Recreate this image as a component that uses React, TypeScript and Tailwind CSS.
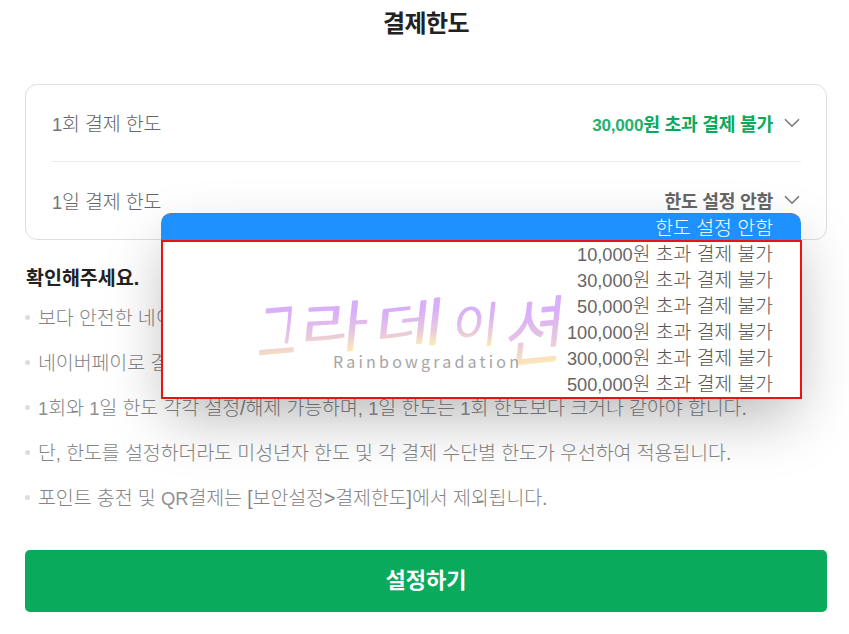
import { Fragment } from "react"

interface Limit {
  id: number
  label: string
  value: string
  color: string
}

const limits: Limit[] = [
  { id: 1, label: "1회 결제 한도", value: "30,000원 초과 결제 불가", color: "text-[#0aaa5c]" },
  { id: 2, label: "1일 결제 한도", value: "한도 설정 안함", color: "text-[#666666]" },
]

const options: string[] = [
  "10,000원 초과 결제 불가",
  "30,000원 초과 결제 불가",
  "50,000원 초과 결제 불가",
  "100,000원 초과 결제 불가",
  "300,000원 초과 결제 불가",
  "500,000원 초과 결제 불가",
]

const notes: string[] = [
  "보다 안전한 네이버페이 이용을 위해 한도를 설정해 주세요.",
  "네이버페이로 결제하는 모든 서비스에 적용됩니다.",
  "1회와 1일 한도 각각 설정/해제 가능하며, 1일 한도는 1회 한도보다 크거나 같아야 합니다.",
  "단, 한도를 설정하더라도 미성년자 한도 및 각 결제 수단별 한도가 우선하여 적용됩니다.",
  "포인트 충전 및 QR결제는 [보안설정>결제한도]에서 제외됩니다.",
]

const watermark = [
  { char: "그", transform: "translate(4 75) rotate(-5) skewX(-9) scale(0.8 1.3)" },
  { char: "라", transform: "translate(46 65) rotate(-3) skewX(-9) scale(1.4 1.05)" },
  { char: "데", transform: "translate(120 63) rotate(-6) skewX(-12) scale(1.48 0.98)" },
  { char: "이", transform: "translate(198 60) rotate(-3) skewX(-9) scale(0.98 0.92)" },
  { char: "션", transform: "translate(250 78) rotate(-6) skewX(-12) scale(1.26 1.4)" },
]

// latin runs are set a little smaller than the hangul
function Mixed({ text }: { text: string }) {
  return (
    <>
      {text.split(/([0-9,A-Z]+)/).map((part, i) =>
        i % 2 ? (
          <span key={i} className="text-[0.945em] opacity-90">{part}</span>
        ) : (
          <Fragment key={i}>{part}</Fragment>
        )
      )}
    </>
  )
}

function Chevron() {
  return (
    <svg width="16" height="10" viewBox="0 0 16 10" fill="none" className="mb-[3px] text-[#777777]">
      <path d="M1 1.2L8 8.2L15 1.2" stroke="currentColor" strokeWidth="1.6" />
    </svg>
  )
}

function Watermark() {
  return (
    <svg width="340" height="100" viewBox="0 0 340 100" className="absolute left-[90px] top-[42px]">
      <defs>
        <linearGradient id="rainbow" x1="0" y1="0" x2="0" y2="1">
          <stop offset="0.25" stopColor="#d9aefa" />
          <stop offset="0.6" stopColor="#e8c8de" />
          <stop offset="0.85" stopColor="#fbe6b8" />
        </linearGradient>
      </defs>
      {watermark.map((w) => (
        <text
          key={w.char}
          transform={w.transform}
          fontSize="52"
          fontWeight="300"
          fill="url(#rainbow)"
          stroke="url(#rainbow)"
          strokeWidth="1.5"
          strokeLinejoin="round"
        >
          {w.char}
        </text>
      ))}
      <text x="80" y="84" fontSize="16" letterSpacing="3.2" fill="#a5a5a5" fontFamily="Noto Sans CJK KR">
        Rainbowgradation
      </text>
    </svg>
  )
}

export default function App() {
  return (
    <div className="relative h-[634px] w-[849px] overflow-hidden whitespace-nowrap bg-white pr-[22px] pl-[25px] font-['Liberation_Sans','Noto_Sans_CJK_KR',sans-serif]">
      <h1 className="h-[84px] pt-[8px] text-center text-[24px] leading-[32px] font-bold tracking-[-0.6px] text-[#222222]">
        결제한도
      </h1>

      {/* Limit card */}
      <div className="h-[156px] rounded-xl border border-[#dedede] px-[25px]">
        {limits.map((limit) => (
          <div
            key={limit.id}
            className="flex h-[77px] items-center justify-between border-b border-[#ececec] pt-[3px] pr-[1px] pl-[1px] last:border-b-0"
          >
            <span className="pt-[1px] text-[19.5px] font-light tracking-[-0.2px] text-[#666666]">
              <Mixed text={limit.label} />
            </span>
            <div className="flex items-center gap-[11px]">
              <span className={`pt-[2px] text-[18.2px] font-bold tracking-[-0.25px] ${limit.color}`}>
                <Mixed text={limit.value} />
              </span>
              <Chevron />
            </div>
          </div>
        ))}
      </div>

      {/* Notes */}
      <h2 className="mt-[25px] h-[29px] pl-[1px] text-[19.5px] leading-[26px] font-bold text-[#222222]">
        확인해주세요.
      </h2>
      <ul className="h-[256px]">
        {notes.map((note) => (
          <li key={note} className="flex h-[45px] items-center">
            <span className="mt-[2px] mr-[8px] size-[5px] rounded-full bg-[#dddddd]" />
            <span className="pt-[4px] text-[19.5px] font-light tracking-[-0.1px] text-[#848486]">
              <Mixed text={note} />
            </span>
          </li>
        ))}
      </ul>

      <button className="flex h-[62px] w-full items-center justify-center rounded-[5px] bg-[#0aaa5c] pb-[2px] text-[22px] font-bold text-white">
        설정하기
      </button>

      {/* Open dropdown */}
      <div className="absolute top-[213px] left-[161px] h-[186px] w-[641px] rounded-t-[10px] shadow-[0_24px_60px_-6px_rgba(0,0,0,0.28)]">
        <div className="mr-[1px] flex h-[27px] items-center justify-end rounded-t-[10px] border-t border-[#777777] bg-[#1e90ff] pt-[3px] pr-[28px] text-[19.4px] font-light text-white">
          한도 설정 안함
        </div>
        <div className="relative h-[159px] border-2 border-[#ee1111] bg-white pr-[27px]">
          <Watermark />
          <ul className="relative text-right text-[19.3px] font-light text-[#555555]">
            {options.map((option) => (
              <li key={option} className="h-[26px] leading-[26px]">
                <Mixed text={option} />
              </li>
            ))}
          </ul>
        </div>
      </div>
    </div>
  )
}
